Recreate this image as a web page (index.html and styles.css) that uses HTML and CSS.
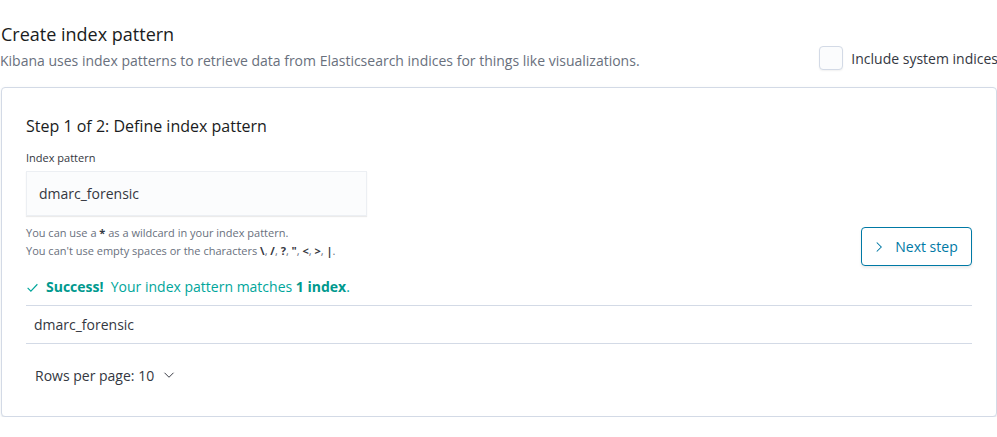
FILE: index.html
```html
<!DOCTYPE html>
<html>
<head>
<meta charset="utf-8">
<link rel="stylesheet" href="styles.css">
</head>
<body>
<div class="page">
  <header class="head">
    <div class="head-text">
      <h1 class="title">Create index pattern</h1>
      <p class="subtitle">Kibana uses index patterns to retrieve data from Elasticsearch indices for things like visualizations.</p>
    </div>
    <label class="sys">
      <span class="checkbox"></span>
      <span class="sys-label">Include system indices</span>
    </label>
  </header>

  <section class="panel">
    <h2 class="step">Step 1 of 2: Define index pattern</h2>
    <div class="form-row">
      <div class="field">
        <div class="field-label">Index pattern</div>
        <div class="input">dmarc_forensic</div>
        <div class="help">
          <div>You can use a <b>*</b> as a wildcard in your index pattern.</div>
          <div>You can't use empty spaces or the characters <b>\</b>, <b>/</b>, <b>?</b>, <b>"</b>, <b>&lt;</b>, <b>&gt;</b>, <b>|</b>.</div>
        </div>
      </div>
      <button class="next">
        <svg class="chev" width="12" height="12" viewBox="0 0 16 16"><path d="M5 2 L11 8 L5 14" fill="none" stroke="#0079a5" stroke-width="1.4"/></svg>
        <span>Next step</span>
      </button>
    </div>
    <div class="success">
      <svg class="check" width="13" height="13" viewBox="0 0 16 16"><path d="M2 8.5 L6 12.5 L14 4" fill="none" stroke="#00a69b" stroke-width="1.4"/></svg>
      <span><b>Success!</b>&nbsp; Your index pattern matches <b>1 index</b>.</span>
    </div>
    <div class="table">
      <div class="row">dmarc_forensic</div>
    </div>
    <div class="pager">
      <span>Rows per page: 10</span>
      <svg class="down" width="12" height="12" viewBox="0 0 16 16"><path d="M2 5 L8 11 L14 5" fill="none" stroke="#343741" stroke-width="1.3"/></svg>
    </div>
  </section>
</div>
</body>
</html>
```

FILE: styles.css
```css
html, body {
  margin: 0;
  padding: 0;
  background: #ffffff;
  overflow: hidden;
}
body {
  font-family: "Open Sans", "Noto Sans", sans-serif;
  color: #1a1c21;
}
.page {
  width: 1010px;
  padding-top: 22px;
}
.head {
  display: flex;
  justify-content: space-between;
  align-items: flex-start;
  padding-left: 1px;
}
.title {
  margin: 0;
  font-size: 18px;
  font-weight: 400;
  line-height: 24px;
  color: #1a1c21;
}
.subtitle {
  margin: 3px 0 0 -1px;
  font-size: 14px;
  line-height: 24px;
  color: #69707d;
}
.sys {
  display: flex;
  align-items: center;
  gap: 8px;
  margin-top: 24px;
  margin-right: 12px;
}
.checkbox {
  width: 22px;
  height: 22px;
  border: 1px solid #d3dae6;
  border-radius: 4px;
  background: #fbfcfd;
  box-shadow: 0 1px 2px rgba(0,0,0,0.06);
}
.sys-label {
  font-size: 14px;
  color: #343741;
}
.panel {
  margin: 14px 0 0 1px;
  width: 946px;
  border: 1px solid #d3dae6;
  border-radius: 4px;
  padding: 24px 24px 32px 24px;
  box-shadow: 0 2px 2px -1px rgba(152,162,179,0.3), 0 1px 5px -2px rgba(152,162,179,0.3);
  background: #fff;
}
.step {
  margin: 2px 0 0 0;
  font-size: 16px;
  font-weight: 400;
  line-height: 24px;
  color: #1a1c21;
}
.form-row {
  display: flex;
  justify-content: space-between;
  align-items: flex-end;
  margin-top: 12px;
}
.field-label {
  font-size: 11px;
  line-height: 16px;
  color: #343741;
  margin-bottom: 5px;
}
.input {
  box-sizing: border-box;
  width: 341px;
  height: 45px;
  padding: 0 12px;
  display: flex;
  align-items: center;
  background: #fbfcfd;
  border: 1px solid #eceff3;
  box-shadow: 0 1px 1px rgba(0,0,0,0.08);
  font-size: 14px;
  color: #343741;
}
.help {
  margin-top: 8px;
  font-size: 11px;
  line-height: 18px;
  color: #69707d;
}
.help b {
  color: #343741;
}
.next {
  box-sizing: border-box;
  width: 111px;
  height: 39px;
  margin-bottom: -6px;
  border: 1px solid #0079a5;
  border-radius: 4px;
  background: #fff;
  color: #0079a5;
  font-family: inherit;
  font-size: 14px;
  display: flex;
  align-items: center;
  justify-content: center;
  gap: 10px;
  padding: 0 12px 0 10px;
  box-shadow: 0 2px 3px rgba(0,0,0,0.08);
}
.success {
  display: flex;
  align-items: center;
  margin-top: 17px;
  font-size: 14px;
  line-height: 20px;
  color: #00a69b;
}
.success b {
  color: #00998e;
  font-weight: 700;
}
.check {
  margin-right: 7px;
}
.table {
  margin-top: 8px;
  border-top: 1px solid #d3dae6;
  border-bottom: 1px solid #d3dae6;
}
.row {
  height: 37px;
  display: flex;
  align-items: center;
  padding-left: 8px;
  font-size: 14px;
  color: #343741;
}
.pager {
  display: flex;
  align-items: center;
  gap: 9px;
  margin-top: 19px;
  padding-left: 9px;
  font-size: 14px;
  color: #343741;
  height: 24px;
  margin-bottom: -3px;
}
```
